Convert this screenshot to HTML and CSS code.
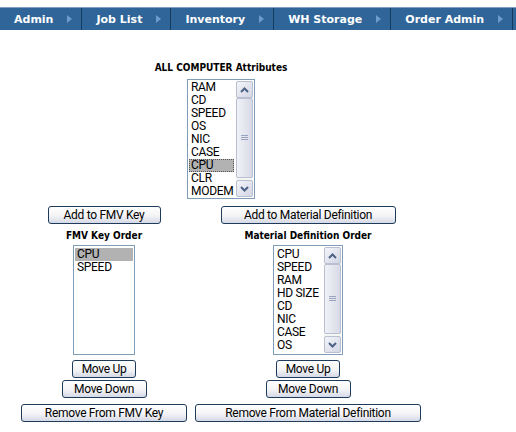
FILE: index.html
```html
<!DOCTYPE html>
<html lang="en">
<head>
    <meta charset="UTF-8">
    <meta name="viewport" content="width=device-width, initial-scale=1.0">
    <title>Computer Attributes</title>
    <link rel="stylesheet" href="styles.css">
</head>
<body>
    <nav class="menu">
        <a class="menu-item">Admin<span class="arrow"></span></a>
        <a class="menu-item">Job List<span class="arrow"></span></a>
        <a class="menu-item">Inventory<span class="arrow"></span></a>
        <a class="menu-item">WH Storage<span class="arrow"></span></a>
        <a class="menu-item">Order Admin<span class="arrow"></span></a>
    </nav>
    <div class="page">
        <div class="all-attrs">
            <div class="caption">ALL COMPUTER Attributes</div>
            <div class="listbox list-all">
                <ul class="items">
                    <li>RAM</li>
                    <li>CD</li>
                    <li>SPEED</li>
                    <li>OS</li>
                    <li>NIC</li>
                    <li>CASE</li>
                    <li class="selected focused">CPU</li>
                    <li>CLR</li>
                    <li>MODEM</li>
                </ul>
                <div class="scrollbar">
                    <div class="sb-btn">
                        <svg width="9" height="6" viewBox="0 0 9 6"><polyline points="1,5 4.5,1.5 8,5" fill="none" stroke="#4d6185" stroke-width="2"/></svg>
                    </div>
                    <div class="sb-thumb">
                        <svg width="7" height="6" viewBox="0 0 7 6"><path d="M0 0.5h7M0 2.5h7M0 4.5h7" stroke="#9aa3bd" stroke-width="1"/></svg>
                    </div>
                    <div class="sb-btn">
                        <svg width="9" height="6" viewBox="0 0 9 6"><polyline points="1,1 4.5,4.5 8,1" fill="none" stroke="#4d6185" stroke-width="2"/></svg>
                    </div>
                </div>
            </div>
        </div>

        <div class="columns">
            <div class="column col-fmv">
                <button class="btn btn-add-fmv">Add to FMV Key</button>
                <div class="caption">FMV Key Order</div>
                <div class="listbox list-fmv">
                    <ul class="items">
                        <li class="selected">CPU</li>
                        <li>SPEED</li>
                    </ul>
                </div>
                <button class="btn btn-up">Move Up</button>
                <button class="btn btn-down">Move Down</button>
                <button class="btn btn-remove btn-remove-fmv">Remove From FMV Key</button>
            </div>

            <div class="column col-material">
                <button class="btn btn-add-material">Add to Material Definition</button>
                <div class="caption">Material Definition Order</div>
                <div class="listbox list-material">
                    <ul class="items">
                        <li>CPU</li>
                        <li>SPEED</li>
                        <li>RAM</li>
                        <li>HD SIZE</li>
                        <li>CD</li>
                        <li>NIC</li>
                        <li>CASE</li>
                        <li>OS</li>
                    </ul>
                    <div class="scrollbar">
                        <div class="sb-btn">
                            <svg width="9" height="6" viewBox="0 0 9 6"><polyline points="1,5 4.5,1.5 8,5" fill="none" stroke="#4d6185" stroke-width="2"/></svg>
                        </div>
                        <div class="sb-thumb">
                            <svg width="7" height="6" viewBox="0 0 7 6"><path d="M0 0.5h7M0 2.5h7M0 4.5h7" stroke="#9aa3bd" stroke-width="1"/></svg>
                        </div>
                        <div class="sb-btn">
                            <svg width="9" height="6" viewBox="0 0 9 6"><polyline points="1,1 4.5,4.5 8,1" fill="none" stroke="#4d6185" stroke-width="2"/></svg>
                        </div>
                    </div>
                </div>
                <button class="btn btn-up">Move Up</button>
                <button class="btn btn-down">Move Down</button>
                <button class="btn btn-remove btn-remove-material">Remove From Material Definition</button>
            </div>
        </div>
    </div>
</body>
</html>
```

FILE: styles.css
```css
body {
    margin: 0;
    padding: 0;
    background-color: #fff;
    color: #000;
    font-family: Roboto, "Liberation Sans", Arial, sans-serif;
}

/* top menu */
.menu {
    display: flex;
    margin-top: 7px;
    height: 22px;
    background-color: #2f6598;
    border-top: 1px solid #7f9fc0;
}
.menu-item {
    display: flex;
    align-items: center;
    padding: 0 9px 0 14px;
    border-right: 1px solid #163a5e;
    color: #fff;
    font-family: "DejaVu Sans", Verdana, sans-serif;
    font-weight: bold;
    font-size: 11px;
    white-space: nowrap;
}
.arrow {
    width: 0;
    height: 0;
    margin-left: 14px;
    border-top: 4px solid transparent;
    border-bottom: 4px solid transparent;
    border-left: 5px solid #6d9dcf;
}

.page {
    width: 426px;
    padding-left: 8px;
    padding-top: 32px;
}

.caption {
    font-family: "DejaVu Sans", Verdana, sans-serif;
    font-stretch: condensed;
    font-weight: bold;
    font-size: 10px;
    line-height: 12px;
    text-align: center;
    white-space: nowrap;
}

.all-attrs {
    display: flex;
    flex-direction: column;
    align-items: center;
}

/* list boxes */
.listbox {
    display: flex;
    box-sizing: border-box;
    border: 1px solid #7f9db9;
    background: #fff;
}
.items {
    flex: 1;
    list-style: none;
    margin: 0;
    padding: 2px 1px 0 1px;
    overflow: hidden;
}
.items li {
    box-sizing: border-box;
    height: 13px;
    line-height: 13px;
    padding-left: 2px;
    font-size: 12px;
    letter-spacing: -0.3px;
    white-space: nowrap;
}
.items li.selected {
    background-color: #b2b2b2;
}
.items li.focused {
    outline: 1px dotted #555;
    outline-offset: -1px;
}

.list-all {
    width: 68px;
    height: 120px;
    margin-top: 5px;
}
.list-all .items {
    padding-top: 1px;
}
.list-fmv {
    width: 62px;
    height: 110px;
    margin-top: 3px;
}
.list-material {
    width: 70px;
    height: 110px;
    margin-top: 3px;
}

.scrollbar {
    display: flex;
    flex-direction: column;
    width: 17px;
    margin: 1px;
    background-color: #f5f5f3;
}
.sb-btn {
    display: flex;
    align-items: center;
    justify-content: center;
    box-sizing: border-box;
    height: 17px;
    border: 1px solid #b9bfd0;
    border-radius: 2px;
    background: linear-gradient(135deg, #f4f5fa, #d2d6e4);
}
.sb-thumb {
    display: flex;
    flex: 1;
    align-items: center;
    justify-content: center;
    margin-bottom: 2px;
    border: 1px solid #b9bfd0;
    border-radius: 2px;
    background: linear-gradient(90deg, #f1f2f8, #d7dae6);
}

/* two columns under the main list */
.columns {
    display: grid;
    grid-template-columns: 192px 216px;
    margin-top: 7px;
}
.column {
    display: flex;
    flex-direction: column;
    align-items: center;
}
.column .caption {
    margin-top: 6px;
}

/* buttons */
.btn {
    box-sizing: border-box;
    height: 18px;
    padding: 0;
    border: 1px solid #1e3b5c;
    border-radius: 3px;
    background: linear-gradient(#ffffff, #f4f4f6 55%, #d5d9e6);
    color: #000;
    font-family: Roboto, "Liberation Sans", Arial, sans-serif;
    font-size: 12px;
    letter-spacing: -0.3px;
    line-height: 16px;
    white-space: nowrap;
    flex-shrink: 0;
}
.btn-add-fmv {
    width: 113px;
}
.btn-add-material {
    width: 175px;
}
.btn-up {
    width: 64px;
    margin-top: 5px;
}
.btn-down {
    width: 85px;
    margin-top: 2px;
}
.btn-remove {
    margin-top: 6px;
}
.btn-remove-fmv {
    width: 166px;
}
.btn-remove-material {
    width: 226px;
}
```
